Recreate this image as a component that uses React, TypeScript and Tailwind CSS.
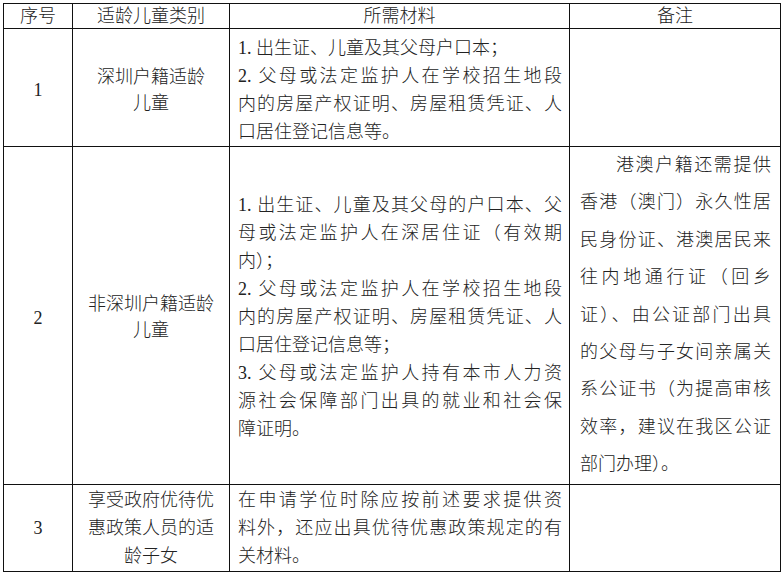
import React from 'react';

type Line = { text: string; full?: boolean; indent?: boolean };

// one visual line per entry; "full" lines are stretched edge to edge like the justified source
const Lines: React.FC<{ lines: Line[]; className?: string }> = ({ lines, className = '' }) => (
  <div className={className}>
    {lines.map((l, i) => (
      <div
        key={i}
        className={`whitespace-nowrap ${l.full ? '[text-align-last:justify] text-justify' : 'text-left'} ${l.indent ? 'indent-[2em]' : ''}`}
      >
        {l.text}
      </div>
    ))}
  </div>
);

const row1Materials: Line[] = [
  { text: '1. 出生证、儿童及其父母户口本；' },
  { text: '2. 父母或法定监护人在学校招生地段', full: true },
  { text: '内的房屋产权证明、房屋租赁凭证、人', full: true },
  { text: '口居住登记信息等。' },
];

const row2Materials: Line[] = [
  { text: '1. 出生证、儿童及其父母的户口本、父', full: true },
  { text: '母或法定监护人在深居住证（有效期', full: true },
  { text: '内）；' },
  { text: '2. 父母或法定监护人在学校招生地段', full: true },
  { text: '内的房屋产权证明、房屋租赁凭证、人', full: true },
  { text: '口居住登记信息等；' },
  { text: '3. 父母或法定监护人持有本市人力资', full: true },
  { text: '源社会保障部门出具的就业和社会保', full: true },
  { text: '障证明。' },
];

const row2Notes: Line[] = [
  { text: '港澳户籍还需提供', full: true, indent: true },
  { text: '香港（澳门）永久性居', full: true },
  { text: '民身份证、港澳居民来', full: true },
  { text: '往内地通行证（回乡', full: true },
  { text: '证）、由公证部门出具', full: true },
  { text: '的父母与子女间亲属关', full: true },
  { text: '系公证书（为提高审核', full: true },
  { text: '效率，建议在我区公证', full: true },
  { text: '部门办理）。' },
];

const row3Materials: Line[] = [
  { text: '在申请学位时除应按前述要求提供资', full: true },
  { text: '料外，还应出具优待优惠政策规定的有', full: true },
  { text: '关材料。' },
];

const cell = 'border border-[#111] align-middle p-0';

export default function App() {
  return (
    <div className="w-[782px] h-[573px] bg-white pt-[3px] pl-[3px] text-[#222] text-[18px] font-light font-['Liberation_Serif','Noto_Sans_CJK_SC',serif]">
      <table className="table-fixed border-collapse w-[777px]">
        <colgroup>
          <col className="w-[69px]" />
          <col className="w-[157px]" />
          <col className="w-[340px]" />
          <col className="w-[211px]" />
        </colgroup>
        <thead>
          <tr className="h-[25px] leading-[22px]">
            <th className={`${cell} font-light text-center`}>序号</th>
            <th className={`${cell} font-light text-center`}>适龄儿童类别</th>
            <th className={`${cell} font-light text-center`}>所需材料</th>
            <th className={`${cell} font-light text-center`}>备注</th>
          </tr>
        </thead>
        <tbody>
          <tr className="h-[116px]">
            <td className={`${cell} text-center pt-[5px]`}>1</td>
            <td className={`${cell} text-center leading-[26px] pt-[5px]`}>
              深圳户籍适龄
              <br />
              儿童
            </td>
            <td className={`${cell} pl-[8px] pr-[7px] pt-[5px]`}>
              <Lines lines={row1Materials} className="leading-[28px]" />
            </td>
            <td className={cell}></td>
          </tr>
          <tr className="h-[337px]">
            <td className={`${cell} text-center pt-[6px]`}>2</td>
            <td className={`${cell} text-center leading-[26px] pt-[3px]`}>
              非深圳户籍适龄
              <br />
              儿童
            </td>
            <td className={`${cell} pl-[8px] pr-[7px] pt-[3px]`}>
              <Lines lines={row2Materials} className="leading-[28px]" />
            </td>
            <td className={`${cell} pl-[10px] pr-[9px]`}>
              <Lines lines={row2Notes} className="leading-[37.4px]" />
            </td>
          </tr>
          <tr className="h-[87px]">
            <td className={`${cell} text-center pt-[2px]`}>3</td>
            <td className={`${cell} text-center leading-[28px]`}>
              享受政府优待优
              <br />
              惠政策人员的适
              <br />
              龄子女
            </td>
            <td className={`${cell} pl-[8px] pr-[7px]`}>
              <Lines lines={row3Materials} className="leading-[28px]" />
            </td>
            <td className={cell}></td>
          </tr>
        </tbody>
      </table>
    </div>
  );
}
